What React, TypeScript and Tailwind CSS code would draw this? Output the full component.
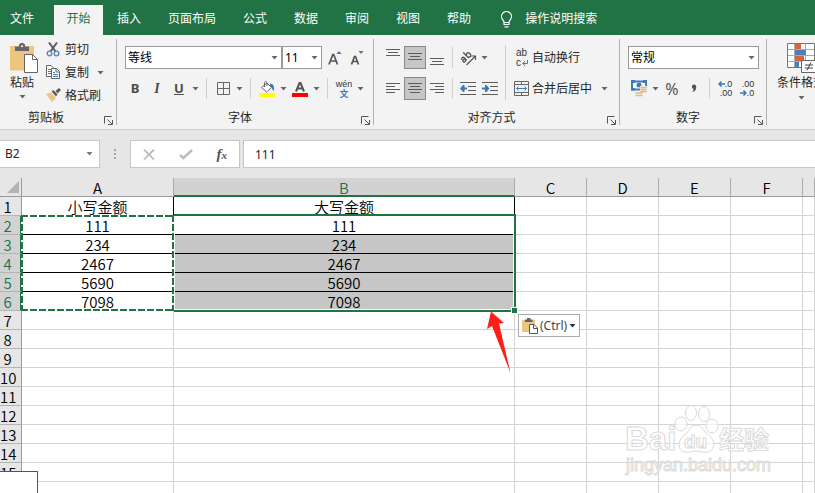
import { useState, type ReactNode } from 'react'
import clsx from 'clsx'

const tabs = ['插入', '页面布局', '公式', '数据', '审阅', '视图', '帮助']
const columns = ['A', 'B', 'C', 'D', 'E', 'F', '']
const rowNumbers = Array.from({ length: 16 }, (_, i) => i + 1)

const initialCells: Record<number, string[]> = {
    1: ['小写金额', '大写金额'],
    2: ['111', '111'],
    3: ['234', '234'],
    4: ['2467', '2467'],
    5: ['5690', '5690'],
    6: ['7098', '7098'],
}

/* ---------- small pieces ---------- */

function Caret({ className = 'text-[#666]' }: { className?: string }) {
    return (
        <svg className={className} width="7" height="4" viewBox="0 0 7 4" fill="currentColor" aria-hidden="true">
            <path d="M0.5 0H6.5L3.5 3.6Z" />
        </svg>
    )
}

function Tool({ label, active, children }: { label: string; active?: boolean; children: ReactNode }) {
    return (
        <button
            type="button"
            aria-label={label}
            className={clsx(
                'flex h-[23px] w-[22px] shrink-0 items-center justify-center',
                active && 'border border-[#8a8a8a] bg-[#c6c6c6]'
            )}
        >
            {children}
        </button>
    )
}

function More({ label }: { label: string }) {
    return (
        <button type="button" aria-label={label} className="flex h-[23px] w-[11px] shrink-0 items-center justify-center">
            <Caret />
        </button>
    )
}

function Group({ title, className, titleClass = 'pl-0.5', children }: {
    title: string
    className?: string
    titleClass?: string
    children: ReactNode
}) {
    return (
        <section className="flex shrink-0">
            <div className={clsx('flex flex-col', className)}>
                <div className="flex h-[75px]">{children}</div>
                <div className="flex h-4 items-center">
                    <h2 className={clsx('grow text-center text-[12px] leading-4', titleClass)}>{title}</h2>
                    <button type="button" aria-label={title + '设置'} className="mt-1 mr-[3px]">
                        <svg width="9" height="9" viewBox="0 0 9 9" fill="none" stroke="#555" aria-hidden="true">
                            <path d="M0.500 7.500V0.500H7.500M3.500 3.500L8 8M8.500 4V8.500H4" />
                        </svg>
                    </button>
                </div>
            </div>
            <div className="mt-1 h-[86px] w-px bg-[#b2b2b2]" />
        </section>
    )
}

function Lines({ widths, align, y }: { widths: number[]; align: 'left' | 'center' | 'right'; y: number }) {
    return (
        <svg className="shrink-0" width="14" height="19" viewBox="0 0 14 19" stroke="#5c5c5c" aria-hidden="true">
            {widths.map((w, i) => {
                const x = align === 'left' ? 0 : align === 'right' ? 14 - w : (14 - w) / 2
                return <path key={i} d={`M${x} ${y + i * 3 - 0.5}h${w}`} />
            })}
        </svg>
    )
}

function ClipboardIcon({ className }: { className: string }) {
    return (
        <svg className={className} viewBox="0 0 28 31" aria-hidden="true">
            <path d="M0 4H24V28.500H0Z" fill="#ecc681" />
            <path d="M5 9V4.500H9V2.500Q12-1 15 2.500V4.500H19V9Z" fill="#666" />
            <path d="M11 3.500H13V5H11Z" fill="#fff" />
            <path d="M14.500 12.500H22.500L27.500 17.500V30.500H14.500Z" fill="#fff" stroke="#666" />
            <path d="M22.500 12.500V17.500H27.500" fill="none" stroke="#666" />
        </svg>
    )
}

function SmallClipboardIcon() {
    return (
        <svg width="16" height="17" viewBox="0 0 16 17" aria-hidden="true">
            <path d="M0 3H13V15H0Z" fill="#ecc681" />
            <path d="M3 5V2.500H5V1H8.500V2.500H10.500V5Z" fill="#666" />
            <path d="M7.500 7.500H12L15.500 11V16.500H7.500Z" fill="#fff" stroke="#555" />
            <path d="M11.500 8V11.500H15" fill="none" stroke="#555" />
        </svg>
    )
}

function IndentIcon({ flip }: { flip?: boolean }) {
    return (
        <svg width="16" height="13" viewBox="0 0 16 13" fill="#3f7ab8" aria-hidden="true">
            <path d="M0 0.500H16M8 4.500H16M8 8.500H16M0 12.500H16" stroke="#5c5c5c" />
            {flip
                ? <path d="M0 5.500H3V3H4.500L7.500 6.500L4.500 10H3V7.500H0Z" />
                : <path d="M7 5.500H4.500V3H3L0 6.500L3 10H4.500V7.500H7Z" />}
        </svg>
    )
}

/* ---------- ribbon groups ---------- */

function ClipboardGroup() {
    return (
        <Group title="剪贴板" className="w-[116px]" titleClass="pr-3">
            <button type="button" className="flex w-11 flex-col items-center pt-[7px] text-[12px]">
                <ClipboardIcon className="ml-1 h-[31px] w-[28px]" />
                <span className="leading-5">粘贴</span>
                <span className="mt-[2px]"><Caret /></span>
            </button>
            <div className="flex flex-col pt-[3px] text-[12px]">
                <button type="button" className="flex h-[23px] items-center gap-1">
                    <svg width="17" height="16" viewBox="0 0 17 16" fill="none" aria-hidden="true">
                        <path d="M5 0.500L11.500 9.500M13 0.500L6.500 9.500" stroke="#5c5c5c" strokeWidth="2" />
                        <circle cx="5.500" cy="11.500" r="2.300" stroke="#4a84bd" strokeWidth="1.300" />
                        <circle cx="12.500" cy="11.500" r="2.300" stroke="#4a84bd" strokeWidth="1.300" />
                    </svg>
                    剪切
                </button>
                <div className="flex h-[23px] items-center">
                    <button type="button" className="flex items-center gap-1">
                        <svg width="17" height="15" viewBox="0 0 17 15" fill="none" aria-hidden="true">
                            <path d="M2.500 0.500H7L9.500 3V11.500H2.500Z" fill="#fff" stroke="#666" />
                            <path d="M4 4.500H7M4 6.500H7M4 8.500H7" stroke="#3f7ab8" />
                            <path d="M7.500 3.500H12.500L15.500 6.500V13.500H7.500Z" fill="#fff" stroke="#666" />
                            <path d="M12 3.500V7H15.500" stroke="#666" />
                            <path d="M9 7.500H11M9 9.500H14M9 11.500H14" stroke="#3f7ab8" />
                        </svg>
                        复制
                    </button>
                    <span className="ml-1.5"><More label="复制选项" /></span>
                </div>
                <button type="button" className="flex h-[23px] items-center gap-1">
                    <svg width="17" height="15" viewBox="0 0 17 15" aria-hidden="true">
                        <path d="M2 6L7 4.500L12 10L8 14Z" fill="#ecc681" />
                        <path d="M7.500 3.500L9.500 2L13.500 6.500L12 8.500Z" fill="#5c5c5c" />
                        <path d="M11.500 3L15 0L17 2L13.500 5.500Z" fill="#5c5c5c" />
                    </svg>
                    格式刷
                </button>
            </div>
        </Group>
    )
}

function Dropdown({ label, value, className }: { label: string; value: string; className: string }) {
    return (
        <div className={clsx('relative h-[23px]', className)}>
            <select
                aria-label={label}
                defaultValue={value}
                className="block h-full w-full appearance-none border border-[#999] bg-white pl-0.5 text-[12px] leading-[18px] text-black outline-none"
            >
                <option>{value}</option>
            </select>
            <span className="pointer-events-none absolute inset-y-0 right-1 flex items-center"><Caret /></span>
        </div>
    )
}

const Divider = () => <div className="mx-[5px] h-[21px] w-px shrink-0 bg-[#d0d0d0]" />
const NarrowDivider = () => <div className="mx-1 h-[21px] w-px shrink-0 bg-[#d0d0d0]" />

function FontGroup() {
    return (
        <Group title="字体" className="w-[256px]">
            <div className="flex flex-col gap-2 pt-[11px] pl-[7px]">
                <div className="flex h-[23px] items-center pl-px">
                    <Dropdown label="字体名称" value="等线" className="w-[157px]" />
                    <Dropdown label="字号" value="11" className="w-10" />
                    <span className="ml-0.5 flex">
                        <Tool label="增大字号">
                            <svg width="14" height="16" viewBox="0 0 14 16" aria-hidden="true">
                                <path d="M1 14.500L4.800 4.500H5.700L9.500 14.500M2.500 11H8" fill="none" stroke="#555" strokeWidth="1.700" />
                                <path d="M8.500 4H13.500L11 1Z" fill="#3f7ab8" />
                            </svg>
                        </Tool>
                        <Tool label="减小字号">
                            <svg width="14" height="16" viewBox="0 0 14 16" aria-hidden="true">
                                <path d="M1.500 14.500L4.500 6.500H5.500L8.500 14.500M3 11.500H7" fill="none" stroke="#555" strokeWidth="1.700" />
                                <path d="M8.500 1H13.500L11 4Z" fill="#3f7ab8" />
                            </svg>
                        </Tool>
                    </span>
                </div>
                <div className="flex h-[23px] items-center text-[13px] font-bold text-[#4d4d4d]">
                    <Tool label="加粗">B</Tool>
                    <Tool label="倾斜"><i className="font-['Liberation_Serif',serif] text-[14px]">I</i></Tool>
                    <Tool label="下划线"><u>U</u></Tool>
                    <More label="下划线选项" />
                    <Divider />
                    <Tool label="边框">
                        <svg width="13" height="13" viewBox="0 0 13 13" fill="none" stroke="#666" aria-hidden="true">
                            <path d="M0.500 0.500H12.500V12.500H0.500ZM6.500 1V12M1 6.500H12" />
                        </svg>
                    </Tool>
                    <More label="边框选项" />
                    <Divider />
                    <Tool label="填充颜色">
                        <svg width="16" height="17" viewBox="0 0 16 17" fill="none" aria-hidden="true">
                            <path d="M2.500 7.500L8 3L12.500 7.500L7.500 12Z" fill="#fff" stroke="#666" />
                            <path d="M5.500 7V2.500Q6.500 0 8 2.500V6" stroke="#666" />
                            <path d="M11 3.500Q16.500 4 14.500 11.500Q13.500 8 11 6Z" fill="#3f7ab8" />
                            <path d="M0 13H16V17H0Z" fill="#ff0" />
                        </svg>
                    </Tool>
                    <More label="填充颜色选项" />
                    <Tool label="字体颜色">
                        <svg width="16" height="17" viewBox="0 0 16 17" fill="none" aria-hidden="true">
                            <path d="M4 11.500L7.500 3H8.500L12 11.500M5.500 8.500H10.500" stroke="#555" strokeWidth="2" />
                            <path d="M0 13H16V17H0Z" fill="#f00" />
                        </svg>
                    </Tool>
                    <More label="字体颜色选项" />
                    <Divider />
                    <Tool label="拼音">
                        <span className="flex flex-col items-center text-[9px] leading-[10px]">
                            <span className="font-['Liberation_Sans',sans-serif] font-normal text-[#333]">wén</span>
                            <span className="text-[#3f7ab8]">文</span>
                        </span>
                    </Tool>
                    <More label="拼音选项" />
                </div>
            </div>
        </Group>
    )
}

function AlignGroup() {
    return (
        <Group title="对齐方式" className="w-[245px]">
            <div className="flex flex-col gap-2 pt-[11px] pl-2">
                <div className="flex h-[23px] items-center">
                    <Tool label="顶端对齐"><Lines widths={[14, 10, 14]} align="center" y={2} /></Tool>
                    <Tool label="垂直居中" active><Lines widths={[14, 10, 14]} align="center" y={6} /></Tool>
                    <Tool label="底端对齐"><Lines widths={[14, 10, 14]} align="center" y={11} /></Tool>
                    <NarrowDivider />
                    <Tool label="方向">
                        <svg width="18" height="18" viewBox="0 0 18 18" fill="none" stroke="#555" aria-hidden="true">
                            <g transform="rotate(-45 7 7)" strokeWidth="1.400">
                                <path d="M1 6.500Q4.500 4.500 4.500 7V10.500M4.500 8Q0.500 7.500 1 9.500Q2 11.500 4.500 9" />
                                <path d="M7.500 2.500V10.500M7.500 7Q11 4 11.500 8Q11 12 7.500 9.500" />
                            </g>
                            <path d="M7.500 16L16 7.500M12.500 7H16.500V11" strokeWidth="1.200" />
                        </svg>
                    </Tool>
                    <More label="方向选项" />
                </div>
                <div className="flex h-[23px] items-center">
                    <Tool label="左对齐"><Lines widths={[14, 9, 14, 9]} align="left" y={5} /></Tool>
                    <Tool label="居中" active><Lines widths={[14, 10, 14, 10]} align="center" y={5} /></Tool>
                    <Tool label="右对齐"><Lines widths={[14, 9, 14, 9]} align="right" y={5} /></Tool>
                    <NarrowDivider />
                    <Tool label="减少缩进量"><IndentIcon /></Tool>
                    <Tool label="增加缩进量"><IndentIcon flip /></Tool>
                </div>
            </div>
            <div className="mt-2.5 ml-1 h-[55px] w-px bg-[#d0d0d0]" />
            <div className="flex flex-col gap-2 pt-[11px] pl-[6px] text-[12px]">
                <button type="button" className="flex h-[23px] items-center">
                    <span className="flex w-5 flex-col pl-1 text-left font-['Liberation_Sans',sans-serif] text-[10px] leading-[10px] text-[#333]">
                        <span>ab</span>
                        <span className="flex items-center gap-px">
                            c
                            <svg width="6" height="6" viewBox="0 0 6 6" fill="none" stroke="#3f7ab8" aria-hidden="true">
                                <path d="M5.500 0V3.500H1M3 1L0.700 3.500L3 6" />
                            </svg>
                        </span>
                    </span>
                    自动换行
                </button>
                <div className="flex h-[23px] items-center">
                    <button type="button" className="flex items-center">
                        <span className="w-5 pl-0.5">
                            <svg width="15" height="15" viewBox="0 0 15 15" fill="none" aria-hidden="true">
                                <path d="M0.500 0.500H14.500V14.500H0.500ZM0.500 3.500H14.500M0.500 11.500H14.500M7.500 0.500V3.500M7.500 11.500V14.500" stroke="#666" />
                                <path d="M2.500 7.500H12.500M4.500 5.500L2.500 7.500L4.500 9.500M10.500 5.500L12.500 7.500L10.500 9.500" stroke="#3f7ab8" />
                            </svg>
                        </span>
                        合并后居中
                    </button>
                    <span className="ml-[7px]"><More label="合并选项" /></span>
                </div>
            </div>
        </Group>
    )
}

function NumberGroup() {
    return (
        <Group title="数字" className="w-[146px]">
            <div className="flex flex-col gap-2 pt-[11px] pl-2">
                <div className="flex h-[23px] items-center">
                    <Dropdown label="数字格式" value="常规" className="w-[131px]" />
                </div>
                <div className="flex h-[23px] items-center">
                    <Tool label="会计数字格式">
                        <svg width="17" height="17" viewBox="0 0 17 17" fill="none" aria-hidden="true">
                            <path d="M1 1.500H15V9.500H1Z" stroke="#3f7ab8" strokeWidth="2" fill="#fff" />
                            <path d="M0 0H4V3H0ZM12 0H16V3H12ZM0 8H4V10.500H0Z" fill="#3f7ab8" />
                            <circle cx="8" cy="5" r="2.500" fill="#3f7ab8" />
                            <path d="M9 6H16V13H9Z" fill="#f3f3f3" />
                            <path d="M4 12H11V16.500H4Z" fill="#f3f3f3" />
                            <path d="M10 7.500H15M10 9.500H15M10 11.500H15M5 13H11M5 15.500H11" stroke="#ecb968" strokeWidth="1.500" strokeLinecap="round" />
                        </svg>
                    </Tool>
                    <More label="会计格式选项" />
                    <Tool label="百分比样式"><span className="text-[16px] leading-5 text-[#555]">%</span></Tool>
                    <Tool label="千位分隔样式">
                        <svg width="6" height="9" viewBox="0 0 6 9" aria-hidden="true">
                            <path d="M3 0.500A2.300 2.300 0 0 0 2.500 5Q2.500 7 1 8Q5 7.500 5.300 3.500Q5.300 0.500 3 0.500Z" fill="#555" />
                        </svg>
                    </Tool>
                    <NarrowDivider />
                    <Tool label="增加小数位数">
                        <span className="flex flex-col items-end font-['Liberation_Sans',sans-serif] text-[9px] leading-[9px] text-[#333]">
                            <span className="flex items-center">
                                <svg width="7" height="6" viewBox="0 0 7 6" fill="none" stroke="#3f7ab8" aria-hidden="true">
                                    <path d="M7 3H1M3.500 0.500L1 3L3.500 5.500" strokeWidth="1.500" />
                                </svg>
                                .0
                            </span>
                            <span>.00</span>
                        </span>
                    </Tool>
                    <Tool label="减少小数位数">
                        <span className="flex flex-col items-end font-['Liberation_Sans',sans-serif] text-[9px] leading-[9px] text-[#333]">
                            <span>.00</span>
                            <span className="flex items-center">
                                <svg width="7" height="6" viewBox="0 0 7 6" fill="none" stroke="#3f7ab8" aria-hidden="true">
                                    <path d="M0 3H6M3.500 0.500L6 3L3.500 5.500" strokeWidth="1.500" />
                                </svg>
                                .0
                            </span>
                        </span>
                    </Tool>
                </div>
            </div>
        </Group>
    )
}

function StylesGroup() {
    return (
        <button type="button" className="flex w-[68px] shrink-0 flex-col items-center pt-2 text-[12px]">
            <svg className="ml-0.5" width="30" height="30" viewBox="0 0 30 30" fill="none" aria-hidden="true">
                <path d="M0.500 0.500H27.500V24.500H0.500Z" fill="#fff" stroke="#777" />
                <path d="M7.500 1V24M18.500 1V24M1 6.500H27M1 12.500H27M1 18.500H27" stroke="#aaa" />
                <path d="M8 1H14V6H8ZM8 13H17V18H8Z" fill="#d9623f" />
                <path d="M8 7H19V12H8ZM8 19H12V24H8Z" fill="#4a7fb8" />
                <path d="M14.500 17.500H29.500V29.500H14.500Z" fill="#fff" stroke="#666" />
                <path d="M18 22H26M18 25H26M24 19.500L20 27.500" stroke="#444" />
            </svg>
            <span className="leading-5">条件格式</span>
            <span className="mt-[3px]"><Caret /></span>
        </button>
    )
}

/* ---------- sheet overlays ---------- */

function CopyMarquee() {
    return (
        <svg className="absolute -top-px -left-px" width="153" height="96" fill="none" stroke="#fff" strokeWidth="2" aria-hidden="true">
            <path d="M0 1H153M1 0V96M0 95H153M152 0V96" />
            <path d="M0 1H153M1 0V96M0 95H153M152 0V96" stroke="#217346" strokeDasharray="7 2" />
        </svg>
    )
}

function Selection() {
    return (
        <div className="pointer-events-none absolute -top-0.5 left-0 h-[98px] w-[342px] border-2 border-l-0 border-[#217346]">
            <div className="h-full w-full border border-white" />
            <div className="absolute -right-[4px] -bottom-[4px] h-[7px] w-[7px] border border-white bg-[#217346]" />
            <svg className="absolute top-[95px] right-[3px]" width="25" height="63" viewBox="0 0 25 63" aria-hidden="true">
                <path d="M5 0.500L18 12L13 12.500L24.500 62L6 15L1 18Z" fill="#ff2015" />
            </svg>
            <button
                type="button"
                className="pointer-events-auto absolute top-[98px] left-[344px] flex h-[23px] w-[62px] items-center border border-[#ababab] bg-white pl-[3px] font-['Noto_Sans',sans-serif] text-[12px] font-normal text-[#444]"
            >
                <SmallClipboardIcon />
                <span className="mr-0.5 ml-0.5">(Ctrl)</span>
                <Caret className="text-[#333]" />
            </button>
        </div>
    )
}

function Watermark() {
    return (
        <svg
            className="pointer-events-none absolute right-[41px] bottom-[13px] font-['Liberation_Sans','Noto_Sans_CJK_SC',sans-serif]"
            width="152"
            height="76"
            viewBox="0 0 152 76"
            fill="#fff"
            fillOpacity="0.7"
            stroke="#dadada"
            aria-hidden="true"
        >
            <text x="3" y="46" fontSize="33" fontWeight="700">Bai</text>
            <ellipse cx="59" cy="20" rx="6" ry="7" />
            <ellipse cx="69" cy="9" rx="5.500" ry="7.500" />
            <ellipse cx="82" cy="10" rx="5.500" ry="7.500" />
            <ellipse cx="90" cy="22" rx="6" ry="7" />
            <path d="M74 21Q79 21 83 28Q92 34 92 41Q90 50 80 48Q74 46 68 48Q58 50 57 41Q57 34 65 29Q69 21 74 21Z" />
            <text x="62" y="44" fontSize="19" fontWeight="700">du</text>
            <text x="97" y="45" fontSize="25" fontWeight="700">经验</text>
            <text x="4" y="67" fontSize="18">jingyan.baidu.com</text>
        </svg>
    )
}

function Sheet() {
    const [cells] = useState(initialCells)
    const selected = (row: number) => row >= 2 && row <= 6

    return (
        <table className="w-full table-fixed border-separate border-spacing-0 bg-white text-[15px] leading-[16px] font-[350] text-black">
            <colgroup>
                <col className="w-[22px]" />
                <col className="w-[152px]" />
                <col className="w-[341px]" />
                <col className="w-[72px]" />
                <col className="w-[72px]" />
                <col className="w-[72px]" />
                <col className="w-[72px]" />
                <col />
            </colgroup>
            <thead>
                <tr className="h-[19px] bg-[#e6e6e6]">
                    <th aria-label="全选" className="border-r border-b border-[#9b9b9b] p-0">
                        <svg className="ml-[7px]" width="12" height="12" aria-hidden="true">
                            <path d="M12 0V12H0Z" fill="#b4b4b4" />
                        </svg>
                    </th>
                    {columns.map((name, i) => (
                        <th
                            key={i}
                            scope="col"
                            className={clsx(
                                'p-0 pt-[2px] font-[350]',
                                name === 'B'
                                    ? 'border-r border-b-2 border-r-[#ababab] border-b-[#217346] bg-[#d2d2d2] leading-[15px] text-[#217346]'
                                    : 'border-r border-b border-r-[#ababab] border-b-[#9b9b9b]'
                            )}
                        >
                            {name}
                        </th>
                    ))}
                </tr>
            </thead>
            <tbody>
                {rowNumbers.map(row => (
                    <tr key={row} className="h-[19px]">
                        <th
                            scope="row"
                            className={clsx(
                                'border-b border-b-[#b4b4b4] p-0 pt-[2px] font-[350]',
                                selected(row)
                                    ? 'border-r-2 border-r-[#217346] bg-[#d2d2d2] text-[#217346]'
                                    : 'border-r border-r-[#9b9b9b] bg-[#e6e6e6]'
                            )}
                        >
                            <span className="block w-[15px] text-center whitespace-nowrap">{row}</span>
                        </th>
                        {columns.map((name, i) => {
                            const value = cells[row]?.[i]
                            return (
                                <td
                                    key={i}
                                    className={clsx(
                                        'border-r border-b p-0 pt-[2px] text-center',
                                        value ? 'border-black' : 'border-[#d4d4d4]',
                                        name === 'B' && row > 2 && row <= 6 && 'bg-[#c6c6c6]',
                                        row === 2 && 'relative',
                                        row === 2 && i < 2 && 'z-10'
                                    )}
                                >
                                    {value}
                                    {row === 2 && name === 'A' && <CopyMarquee />}
                                    {row === 2 && name === 'B' && <Selection />}
                                </td>
                            )
                        })}
                    </tr>
                ))}
            </tbody>
        </table>
    )
}

export default function App() {
    const [formula, setFormula] = useState('111')

    return (
        <div className="relative flex h-screen flex-col overflow-hidden bg-white font-['Noto_Sans','Noto_Sans_CJK_SC',sans-serif] text-[#262626]">
            {/* Tabs */}
            <nav className="flex h-[35px] shrink-0 items-end bg-[#217346] pl-2.5 text-[12px] whitespace-nowrap text-white">
                <button type="button" className="mr-5 h-[30px] pb-0.5">文件</button>
                <button type="button" className="mr-3.5 h-[30px] w-[49px] bg-[#f3f3f3] pb-0.5 text-[#217346]">开始</button>
                <div className="flex gap-[27px]">
                    {tabs.map(tab => (
                        <button key={tab} type="button" className="h-[30px] pb-0.5">{tab}</button>
                    ))}
                </div>
                <button type="button" className="ml-[29px] flex h-[30px] items-center gap-3 pb-0.5">
                    <svg width="13" height="17" viewBox="0 0 13 17" fill="none" stroke="#fff" strokeWidth="1.200" aria-hidden="true">
                        <path d="M4 11.500Q4 10 2.500 8.500A5 5 0 1 1 10.500 8.500Q9 10 9 11.500V13.500H4ZM4.500 15.800H8.500M4 11.500H9" />
                    </svg>
                    操作说明搜索
                </button>
            </nav>

            {/* Ribbon */}
            <div className="flex h-[95px] shrink-0 overflow-hidden border-b border-[#cfcfcf] bg-[#f3f3f3] whitespace-nowrap">
                <ClipboardGroup />
                <FontGroup />
                <AlignGroup />
                <NumberGroup />
                <StylesGroup />
            </div>

            {/* Formula bar */}
            <div className="flex shrink-0 items-center bg-[#e6e6e6] py-2.5 text-[12px]">
                <div className="flex h-7 w-[100px] items-center border border-l-0 border-[#c6c6c6] bg-white pr-1.5">
                    <input aria-label="名称框" defaultValue="B2" className="w-full min-w-0 grow bg-transparent pl-[5px] outline-none" />
                    <button type="button" aria-label="名称列表"><Caret className="w-[7px] text-[#777]" /></button>
                </div>
                <svg className="mx-3.5" width="2" height="11" fill="#a6a6a6" aria-hidden="true">
                    <path d="M0 0h2v2H0zM0 4h2v2H0zM0 8h2v2H0z" />
                </svg>
                <div className="flex h-7 w-[110px] items-center justify-around border border-[#c6c6c6] bg-white">
                    <button type="button" aria-label="取消">
                        <svg width="12" height="11" viewBox="0 0 12 11" fill="none" stroke="#bdbdbd" strokeWidth="1.800" aria-hidden="true">
                            <path d="M1 0.500L11 10.500M11 0.500L1 10.500" />
                        </svg>
                    </button>
                    <button type="button" aria-label="输入">
                        <svg width="14" height="11" viewBox="0 0 14 11" fill="none" stroke="#bdbdbd" strokeWidth="2.500" aria-hidden="true">
                            <path d="M1 6L4.500 9L13 1" />
                        </svg>
                    </button>
                    <button type="button" aria-label="插入函数" className="font-['Liberation_Serif',serif] text-[15px] leading-5 font-bold text-[#555] italic">
                        f<span className="text-[11px]">x</span>
                    </button>
                </div>
                <input
                    aria-label="编辑栏"
                    value={formula}
                    onChange={e => setFormula(e.target.value)}
                    className="ml-[3px] h-7 min-w-0 grow border border-r-0 border-[#c6c6c6] bg-white pl-[11px] outline-none"
                />
            </div>

            {/* Grid */}
            <main className="min-h-0 grow overflow-hidden font-['Noto_Sans_CJK_SC',sans-serif]">
                <Sheet />
            </main>

            <Watermark />
            <div className="absolute bottom-0 left-0 z-20 h-[22px] w-[38px] border-t border-r border-[#555] bg-white" />
        </div>
    )
}
